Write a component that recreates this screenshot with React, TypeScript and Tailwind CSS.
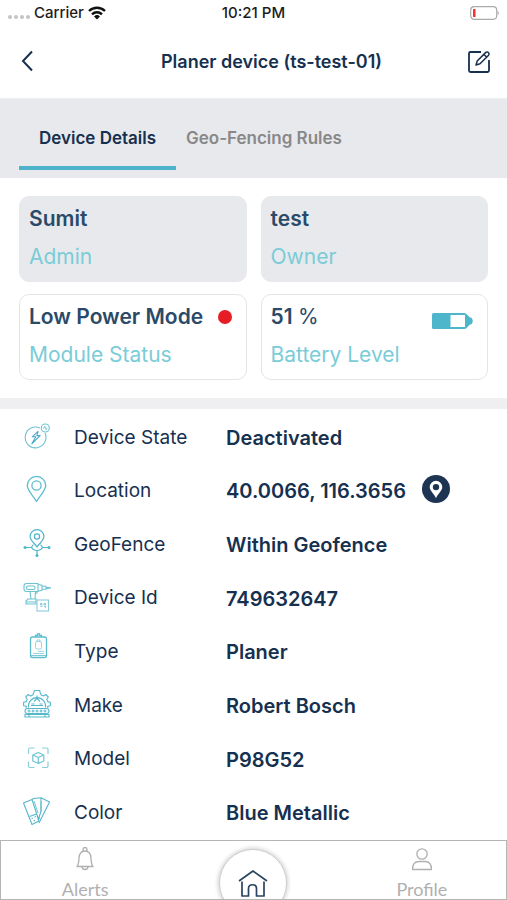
import React from "react";

const DeviceStateIcon = () => (
  <svg viewBox="0 0 28 28" className="w-7 h-7" fill="none" stroke="#6cc3d2" strokeWidth="1.1">
    <path d="M17 6a10.400 10.400 0 1 0 5 5" />
    <circle cx="22.300" cy="6" r="4" />
    <path d="M20.500 6.800l1.400-2.600.3 2H24l-1.400 2" strokeWidth="0.9" />
    <path d="M15.200 9.200l-6 5.600h3.600L8.600 22M15.200 9.200l-1.400 4.400h3.400L8.600 22" stroke="#4aa9c9" strokeLinejoin="round" />
  </svg>
);

const PinIcon = () => (
  <svg viewBox="0 0 28 28" className="w-7 h-7" fill="none" stroke="#5bbdce" strokeWidth="1.3">
    <path d="M13.5 26.5C10 20.5 4.3 15.700 4.300 10.600a9.200 9.200 0 0 1 18.400 0c0 5.100-5.700 9.900-9.200 15.900z" strokeLinejoin="round" />
    <circle cx="13.500" cy="10.500" r="4.600" />
  </svg>
);

const GeoFenceIcon = () => (
  <svg viewBox="0 0 28 28" className="w-7 h-7" fill="none" stroke="#4fb5c9" strokeWidth="1.2">
    <path d="M14 18c-2-3.600-6.900-6.300-6.900-10.500a6.900 6.900 0 0 1 13.800 0C20.900 11.700 16 14.400 14 18z" />
    <circle cx="14" cy="7.500" r="2.600" />
    <path d="M2 18.500h7M19 18.500h7M14 21.500v5M10.500 15.700c-2.200 1-2.200 3.500-.5 4.500 2.300 1.500 5.700 1.500 8 0 1.700-1 1.700-3.500-.5-4.500" />
    <g fill="#4fb5c9" stroke="none">
      <circle cx="2" cy="18.500" r="1.500" />
      <circle cx="26" cy="18.500" r="1.500" />
      <circle cx="14" cy="26.400" r="1.500" />
    </g>
  </svg>
);

const DrillIcon = () => (
  <svg viewBox="0 0 28 30" className="w-7 h-[30px]" fill="none" stroke="#6cc3d2" strokeWidth="1.1">
    <path d="M3.500 1.500H15v8H3.500C2 9.500 1 8.500 1 7V4c0-1.500 1-2.500 2.500-2.500z" />
    <path d="M15 2.500l4 .8v5l-4 .9M19 4.300h4v3h-4M23 5.300l5 .6M23 6.500l5-.6" />
    <rect x="3.500" y="4" width="8.500" height="3.500" rx="1.500" />
    <path d="M7 9.500l1 7.500M12.500 9.500L12 17M14.500 9.500c-.2 1.500-1 2.200-2 2.300" />
    <path d="M5 17h8v5H3v-3zM3 20h10" />
    <rect x="14" y="18" width="11.500" height="11" fill="#fff" stroke="#8bcbdc" />
    <path d="M17.500 21.500h1.500v1.500h-1.500zM21 21.500h1.500v1.500H21zM17.500 24.500h2M21 24.500h1.500v1.500" strokeWidth="0.8" />
  </svg>
);

const BadgeIcon = () => (
  <svg viewBox="0 0 28 28" className="w-7 h-7" fill="none" stroke="#5bbdce" strokeWidth="1.3">
    <rect x="7.500" y="5" width="16" height="20.500" rx="2" />
    <path d="M12.500 5V3.500h2V2h2v1.500h2V5" />
    <rect x="12.500" y="9.500" width="6" height="7.500" rx="1.500" stroke="#8ed0dc" strokeWidth="0.900" />
    <path d="M14 9.500V8h3v1.500M15 19.300h6M10 21.500h11" stroke="#8ed0dc" strokeWidth="0.900" />
    <path d="M8 23.500h15" strokeWidth="0.800" />
  </svg>
);

const FactoryIcon = () => (
  <svg viewBox="0 0 28 28" className="w-7 h-7" fill="none" stroke="#55b9cc" strokeWidth="1.1">
    <path d="M3 18l.4-1.700-2.800-.6v-3.500l2.700-.6.9-2.300-1.500-2.300 2.500-2.500 2.400 1.500 2.200-1L10.800 2.500l.6-2h5.200l.6 2 1 2.500 2.200 1 2.400-1.500 2.500 2.500-1.500 2.300.9 2.300 2.700.6v3.500l-2.800.6.400 1.700" strokeLinejoin="round" />
    <path d="M5.500 17.500a8.600 8.600 0 1 1 17 0" />
    <path d="M14 5.500v3l-3 3M14 8.500l3 3M12.800 8.500h2.400M8 15.500h12M8.500 14h3M16.500 14h3" />
    <rect x="2" y="18.500" width="24" height="5" rx="2.500" />
    <path d="M2 27h24v-2.500H2zM6 24.500V27M22 24.500V27" />
    <g strokeWidth="1">
      <circle cx="6" cy="21" r="1" />
      <circle cx="10" cy="21" r="1" />
      <circle cx="14" cy="21" r="1" />
      <circle cx="18" cy="21" r="1" />
      <circle cx="22" cy="21" r="1" />
    </g>
  </svg>
);

const ModelIcon = () => (
  <svg viewBox="0 0 28 28" className="w-7 h-7" fill="none" stroke="#6fc4d2" strokeWidth="1.2">
    <path d="M5.500 10V5.500a1.500 1.500 0 0 1 1.500-1.500h4.500M19 4h4.500A1.500 1.500 0 0 1 25 5.500V10M25 17.500V22a1.500 1.500 0 0 1-1.500 1.500H19M11.500 23.500H7A1.500 1.500 0 0 1 5.500 22v-4.500" stroke="#8acfd8" />
    <path d="M15.300 8.500l5.500 2.500v6l-5.500 2.500-5.500-2.500v-6zM9.800 11l5.500 2.500L20.800 11M15.300 13.500v6" strokeLinejoin="round" />
  </svg>
);

const SwatchIcon = () => (
  <svg viewBox="0 0 28 28" className="w-7 h-7" fill="none" stroke="#55b6cc" strokeWidth="1.1" strokeLinejoin="round">
    <path d="M.5 6l8.500-3.500L16 24l-7 3.500z" />
    <path d="M9 2.500l1.500-1L18 .8v13.700L15 23M18 .8l8.500 4.200L16 26" />
    <path d="M6.500 19.500l7.500-2.700M11.500 20l1.500-.5M8.500 21.500l1.300-.4M10.500 24l1.500-.5M14.500 20l2.500 1.500" />
    <path d="M18 4.500v10M11 4l4 12" strokeWidth="0.800" />
  </svg>
);

const details = [
  { label: "Device State", value: "Deactivated", icon: <DeviceStateIcon /> },
  { label: "Location", value: "40.0066, 116.3656", icon: <PinIcon />, map: true },
  { label: "GeoFence", value: "Within Geofence", icon: <GeoFenceIcon /> },
  { label: "Device Id", value: "749632647", icon: <DrillIcon /> },
  { label: "Type", value: "Planer", icon: <BadgeIcon />, raised: true },
  { label: "Make", value: "Robert Bosch", icon: <FactoryIcon /> },
  { label: "Model", value: "P98G52", icon: <ModelIcon /> },
  { label: "Color", value: "Blue Metallic", icon: <SwatchIcon /> },
];

const StatusBar = () => (
  <div className="grid grid-cols-3 items-center h-[26px] px-2 text-[15px] font-medium text-[#1c1c1c]">
    <div className="flex items-center gap-1">
      <span className="flex gap-0.5 pt-2">
        <i className="w-1 h-1 rounded-full bg-[#c4c4c4]" />
        <i className="w-1 h-1 rounded-full bg-[#c4c4c4]" />
        <i className="w-1 h-1 rounded-full bg-[#c4c4c4]" />
        <i className="w-1 h-1 rounded-full bg-[#c4c4c4]" />
      </span>
      <span>Carrier</span>
      <svg viewBox="0 0 18 14" className="w-[18px] h-3.5" fill="none" stroke="#111" strokeWidth="2.400">
        <path d="M1 5a11.500 11.500 0 0 1 16 0M4 8.300a7.200 7.200 0 0 1 10 0" />
        <path d="M9 13.500l-3-3.100a4.300 4.300 0 0 1 6 0z" fill="#111" stroke="none" />
      </svg>
    </div>
    <span className="text-center">10:21 PM</span>
    <svg viewBox="0 0 30 14" className="w-[30px] h-3.5 justify-self-end" fill="none">
      <rect x="1.700" y="0.700" width="26" height="12.600" rx="3.500" stroke="#aaa" strokeWidth="1.200" />
      <rect x="4" y="3" width="2.500" height="8" rx="0.500" fill="#f5322d" />
      <path d="M28.700 5v4c1.300-.6 1.300-3.400 0-4z" fill="#999" />
    </svg>
  </div>
);

const Header = () => (
  <header className="flex items-center h-[73px] px-4 border-b border-[#eeeff1] text-[#16304f]">
    <button type="button" aria-label="Back" className="w-6 h-6">
      <svg viewBox="0 0 24 24" className="w-6 h-6" fill="none" stroke="currentColor" strokeWidth="2">
        <path d="M16 1.500L7 11l9 9.500" />
      </svg>
    </button>
    <h1 className="flex-1 pl-9 text-center text-lg font-semibold">Planer device (ts-test-01)</h1>
    <button type="button" aria-label="Edit" className="w-6 h-6">
      <svg viewBox="0 0 24 24" className="w-6 h-6" fill="none" stroke="currentColor" strokeWidth="1.800" strokeLinejoin="round">
        <path d="M14 2H3.500A1.500 1.500 0 0 0 2 3.500v17A1.500 1.500 0 0 0 3.500 22h17a1.500 1.500 0 0 0 1.500-1.500V10" />
        <path d="M9 15l1.200-4 8.600-8.600a2 2 0 0 1 2.800 2.800L13 13.800zM17 4.500l2.800 2.800" strokeWidth="1.500" />
      </svg>
    </button>
  </header>
);

const Tabs = () => (
  <div role="tablist" className="flex h-[79px] px-[19px] pb-2 bg-[#e8e9ec] text-[17px] font-semibold">
    <button type="button" role="tab" aria-selected="true" className="w-[157px] pt-2 border-y-4 border-t-transparent border-b-[#4db3c9] text-[#16304f]">
      Device Details
    </button>
    <button type="button" role="tab" aria-selected="false" className="px-2.5 pt-2 text-[#888]">
      Geo-Fencing Rules
    </button>
  </div>
);

type CardProps = { title: React.ReactNode; caption: string; filled?: boolean; children?: React.ReactNode };

const Card = ({ title, caption, filled, children }: CardProps) => (
  <div className={`h-[86px] rounded-[10px] border pl-[9px] pr-3.5 pt-1.5 text-[21px] leading-8 ${filled ? "bg-[#e8e9ec] border-[#e8e9ec]" : "bg-white border-[#e4e5e8]"}`}>
    <div className="flex items-center justify-between h-8 font-semibold text-[#2a4a68]">
      <span>{title}</span>
      {children}
    </div>
    <p className="pt-1.5 text-[#7accd8]">{caption}</p>
  </div>
);

const Details = () => (
  <dl className="flex-1 grid auto-rows-fr pt-0.5 text-[#16304f] text-[19px]">
    {details.map((d) => (
      <div key={d.label} className="min-h-[53px] flex items-center pl-[23px]">
        <span className={`w-[51px] ${d.raised ? "pb-3" : "pb-1"}`}>{d.icon}</span>
        <dt className="w-[152px]">{d.label}</dt>
        <dd className="flex items-center gap-4 text-xl font-semibold">
          {d.value}
          {d.map && (
            <button type="button" aria-label="Show on map" className="w-7 h-7 mb-1">
              <svg viewBox="0 0 29 29" className="w-7 h-7">
                <circle cx="14.500" cy="14.500" r="14.500" fill="#1d3552" />
                <path d="M14.500 24c-2-4.600-6.500-7.500-6.500-11.500a6.500 6.500 0 0 1 13 0c0 4-4.500 6.900-6.500 11.500z" fill="#fff" />
                <circle cx="14.500" cy="12.500" r="3.300" fill="#1d3552" />
              </svg>
            </button>
          )}
        </dd>
      </div>
    ))}
  </dl>
);

const BottomNav = () => (
  <nav className="sticky bottom-0 grid grid-cols-3 justify-items-center h-[60px] overflow-hidden bg-white border border-[#b5b5b5] text-[#b0b0b0] font-['Lato',sans-serif] text-lg">
    <a href="#alerts" className="flex flex-col items-center pt-1.5">
      <svg viewBox="0 0 24 24" className="w-6 h-6" fill="none" stroke="currentColor" strokeWidth="1.300" strokeLinejoin="round">
        <path d="M4 19.500c1.800-2 1.800-4.500 2-8.500C6.300 6.500 8.500 4 12 4s5.700 2.500 6 7c.2 4 .2 6.500 2 8.500z" />
        <path d="M10 4V2.500a2 2 0 0 1 4 0V4M9 19.500a3 3 0 0 0 6 0" />
      </svg>
      <span className="pt-1">Alerts</span>
    </a>
    <a href="#home" aria-label="Home" className="flex items-center justify-center w-[68px] h-[68px] mt-2 rounded-full bg-white border border-[#cfcfcf] shadow-[0_0_4px_1px_#cfcfcf] text-[#2b4460]">
      <svg viewBox="0 0 30 30" className="w-[30px] h-[30px]" fill="none" stroke="currentColor" strokeWidth="1.700" strokeLinejoin="round">
        <path d="M1 13L15 3l14 10" />
        <path d="M4 13.500V28h6.500v-7.500c0-5 8-5 8 0V28H26V13.500" />
      </svg>
    </a>
    <a href="#profile" className="flex flex-col items-center pt-1.5">
      <svg viewBox="0 0 24 24" className="w-6 h-6" fill="none" stroke="currentColor" strokeWidth="1.300" strokeLinejoin="round">
        <circle cx="12" cy="7" r="5.200" />
        <path d="M2.500 22.500c0-5.500 3-8 6.500-8h6c3.500 0 6.500 2.500 6.500 8z" />
      </svg>
      <span className="pt-1">Profile</span>
    </a>
  </nav>
);

const App = () => (
  <div className="min-h-screen flex flex-col bg-white font-['Inter',sans-serif]">
    <StatusBar />
    <Header />
    <Tabs />
    <section className="grid grid-cols-2 gap-x-3.5 gap-y-3 px-[19px] py-[18px]">
      <Card title="Sumit" caption="Admin" filled />
      <Card title="test" caption="Owner" filled />
      <Card title="Low Power Mode" caption="Module Status">
        <span className="w-3.5 h-3.5 rounded-full bg-[#e71d25]" />
      </Card>
      <Card title={<>51 <span className="font-normal">%</span></>} caption="Battery Level">
        <svg viewBox="0 0 41 16" className="w-[41px] h-4 mt-2">
          <rect width="34" height="16" rx="1.500" fill="#4db6ca" />
          <path d="M34 .5l4 4h1c2.300 1.500 2.300 5.500 0 7h-1l-4 4z" fill="#4db6ca" />
          <rect x="18.500" y="2" width="14.500" height="12" fill="#fff" />
        </svg>
      </Card>
    </section>
    <div className="h-[11px] bg-[#efeff2]" />
    <Details />
    <BottomNav />
  </div>
);

export default App;
